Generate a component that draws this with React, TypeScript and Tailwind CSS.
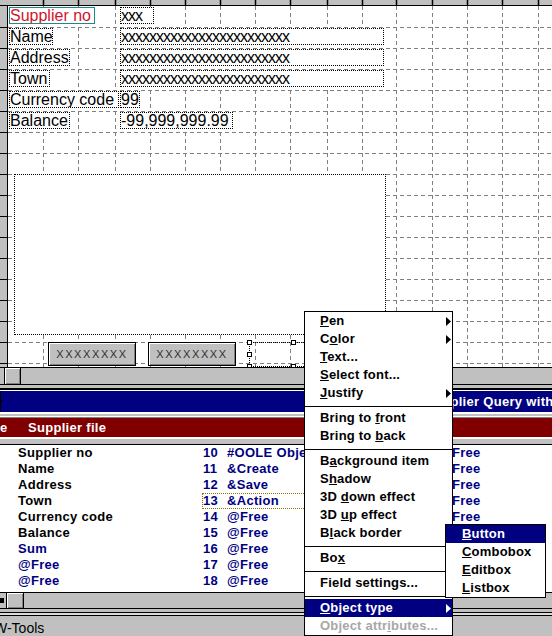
import type { ReactNode } from "react";

const GRID_X = [43, 78, 115, 150, 185, 220, 255, 290, 327, 362, 396, 432, 467, 502, 538];
const GRID_Y = Array.from({ length: 17 }, (_, i) => 27 + i * 21);
const XS = "x".repeat(24);

const formRows = [
  { label: "Supplier no", labelW: "w-[86px]", value: "xxx", valueW: "w-[34px]", key: true },
  { label: "Name", labelW: "w-[44px]", value: XS, valueW: "w-[264px]" },
  { label: "Address", labelW: "w-[61px]", value: XS, valueW: "w-[264px]" },
  { label: "Town", labelW: "w-[41px]", value: XS, valueW: "w-[264px]" },
  { label: "Currency code", labelW: "w-[110px]", value: "99", valueW: "w-[20px]" },
  { label: "Balance", labelW: "w-[61px]", value: "-99,999,999.99", valueW: "w-[113px]" },
];

const fields = [
  { name: "Supplier no" },
  { name: "Name" },
  { name: "Address" },
  { name: "Town" },
  { name: "Currency code" },
  { name: "Balance" },
  { name: "Sum", navy: true },
  { name: "@Free", navy: true },
  { name: "@Free", navy: true },
];

const objects = [
  { no: "10", name: "#OOLE Object" },
  { no: "11", name: "&Create" },
  { no: "12", name: "&Save" },
  { no: "13", name: "&Action", selected: true },
  { no: "14", name: "@Free" },
  { no: "15", name: "@Free" },
  { no: "16", name: "@Free" },
  { no: "17", name: "@Free" },
  { no: "18", name: "@Free" },
];

type Entry = { text: string; u: number; arrow?: boolean; active?: boolean; disabled?: boolean } | "sep";

const menu: Entry[] = [
  { text: "Pen", u: 0, arrow: true },
  { text: "Color", u: 1, arrow: true },
  { text: "Text...", u: 0 },
  { text: "Select font...", u: 0 },
  { text: "Justify", u: 0, arrow: true },
  "sep",
  { text: "Bring to front", u: 9 },
  { text: "Bring to back", u: 9 },
  "sep",
  { text: "Background item", u: 1 },
  { text: "Shadow", u: 1 },
  { text: "3D down effect", u: 3 },
  { text: "3D up effect", u: 3 },
  { text: "Black border", u: 1 },
  "sep",
  { text: "Box", u: 2 },
  "sep",
  { text: "Field settings...", u: -1 },
  "sep",
  { text: "Object type", u: 0, arrow: true, active: true },
  { text: "Object attributes...", u: 11, disabled: true },
];

const subMenu: Entry[] = [
  { text: "Button", u: 0, active: true },
  { text: "Combobox", u: 0 },
  { text: "Editbox", u: 0 },
  { text: "Listbox", u: 0 },
];

function mnemonic(text: string, u: number): ReactNode {
  if (u < 0) return text;
  return (
    <>
      {text.slice(0, u)}
      <u className="underline decoration-1 underline-offset-1">{text[u]}</u>
      {text.slice(u + 1)}
    </>
  );
}

function Arrow() {
  return (
    <svg width="5" height="9" viewBox="0 0 5 9" className="absolute right-[1px] top-[5px] fill-current">
      <path d="M0 0L5 4.5L0 9Z" />
    </svg>
  );
}

function MenuList({ entries, pad }: { entries: Entry[]; pad: string }) {
  return (
    <>
      {entries.map((e, i) =>
        e === "sep" ? (
          <div key={i} className="h-[7px] pt-[4px]">
            <div className="h-px bg-black" />
          </div>
        ) : (
          <div
            key={i}
            className={`relative h-[18px] ${pad} text-[13px] font-bold leading-[18px] tracking-[0.2px] whitespace-nowrap ${
              e.active ? "bg-[#000080] text-white" : e.disabled ? "text-[#a8a8a8]" : "text-black"
            }`}
          >
            {mnemonic(e.text, e.u)}
            {e.arrow && <Arrow />}
          </div>
        )
      )}
    </>
  );
}

function Handle({ pos }: { pos: string }) {
  return <div className={`absolute h-[5px] w-[5px] border border-black bg-white ${pos}`} />;
}

function XButton() {
  return (
    <div className="flex h-[24px] w-[88px] items-center justify-center border border-black bg-[#c0c0c0] text-[11px] tracking-[1.6px] text-[#303030] shadow-[inset_1px_1px_0_#fff,inset_-1px_-1px_0_#808080]">
      XXXXXXXX
    </div>
  );
}

export default function App() {
  return (
    <div className="relative h-[636px] w-[552px] overflow-hidden bg-[#c0c0c0] font-['Liberation_Sans',Arial,sans-serif]">
      {/* form designer pane */}
      <div className="flex h-[367px] flex-col bg-white">
        <div className="relative h-[6px] border-b border-black bg-[#c0c0c0]">
          <svg className="absolute inset-0" width="552" height="5">
            {GRID_X.map((x) => (
              <line key={x} x1={x + 0.5} x2={x + 0.5} y1={0} y2={5} stroke="#000" strokeWidth={1.5} />
            ))}
          </svg>
        </div>
        <div className="flex h-[361px]">
          <div className="relative w-[8px] border-r border-black bg-[#c0c0c0]">
            <svg className="absolute inset-0" width="7" height="361">
              {GRID_Y.map((y) => (
                <line key={y} x1={0} x2={7} y1={y - 6 + 0.5} y2={y - 6 + 0.5} stroke="#000" />
              ))}
            </svg>
          </div>
          <div className="relative flex-1 overflow-hidden">
            <svg className="absolute inset-0" width="544" height="361">
              {GRID_X.map((x) => (
                <line key={x} x1={x - 8 + 0.5} x2={x - 8 + 0.5} y1={0} y2={361} stroke="#808080" strokeDasharray="4 3" />
              ))}
              {GRID_Y.map((y) => (
                <line key={y} x1={0} x2={544} y1={y - 6 + 0.5} y2={y - 6 + 0.5} stroke="#808080" strokeDasharray="4 3" />
              ))}
            </svg>

            <div className="relative flex flex-col pl-[1px] pt-[1px] text-[16px] leading-[15px]">
              <div className="flex flex-col gap-[4px]">
                {formRows.map((r) => (
                  <div key={r.label} className="flex h-[17px]">
                    <div className="w-[111px]">
                      <div
                        className={`h-[17px] ${r.labelW} overflow-hidden whitespace-nowrap bg-white ${
                          r.key ? "border border-[#1a8a8a] text-[#d0142a]" : "border border-dotted border-black text-black"
                        }`}
                      >
                        {r.label}
                      </div>
                    </div>
                    <div
                      className={`h-[17px] ${r.valueW} overflow-hidden whitespace-nowrap border border-dotted border-black bg-white text-black ${
                        r.value.startsWith("x") ? "tracking-[-1px]" : ""
                      }`}
                    >
                      {r.value}
                    </div>
                  </div>
                ))}
              </div>

              <div className="ml-[5px] mt-[45px] h-[161px] w-[372px] border border-dotted border-black bg-white" />

              <div className="mt-[7px] flex h-[25px] items-start">
                <div className="ml-[39px]">
                  <XButton />
                </div>
                <div className="ml-[12px]">
                  <XButton />
                </div>
                <div className="relative ml-[13px] h-[25px] w-[89px] border border-dotted border-black">
                  <Handle pos="-left-[3px] -top-[3px]" />
                  <Handle pos="-left-[3px] top-[9px]" />
                  <Handle pos="-left-[3px] top-[21px]" />
                  <Handle pos="left-[41px] -top-[3px]" />
                  <Handle pos="left-[41px] top-[21px]" />
                </div>
              </div>
            </div>
          </div>
        </div>
      </div>

      {/* pane scrollbar */}
      <div className="flex h-[18px] border-y border-black bg-[#c0c0c0]">
        <div className="w-[5px] border-r border-black" />
        <div className="w-[16px] border-r border-black shadow-[inset_1px_1px_0_#fff,inset_-1px_-1px_0_#808080]" />
      </div>
      <div className="h-[3px] bg-[#c0c0c0]" />
      <div className="h-[2px] bg-black" />
      <div className="h-px bg-white" />

      {/* query window title */}
      <div className="flex h-[21px] items-center bg-[#000080] text-[13px] font-bold tracking-[0.3px] text-white">
        <div className="relative h-full w-[7px] border-r border-black bg-[#c0c0c0]">
          <div className="absolute left-0 top-[9px] h-[2px] w-[2px] bg-black" />
        </div>
        <span className="ml-[424px] whitespace-nowrap">Supplier Query with buttons</span>
      </div>
      <div className="h-[2px] bg-white" />
      <div className="h-[2px] bg-[#c0c0c0]" />
      <div className="h-px bg-white" />
      <div className="h-px bg-[#808080]" />

      <div className="flex h-[19px] items-center bg-[#800000] text-[13px] font-bold tracking-[0.3px] text-white">
        <span className="w-[28px]">e</span>
        <span>Supplier file</span>
      </div>
      <div className="h-[2px] bg-white" />
      <div className="h-[5px] bg-[#c0c0c0]" />
      <div className="h-px bg-black" />

      {/* field list */}
      <div className="flex h-[147px] bg-white pl-[18px] text-[13px] font-bold leading-[16px] tracking-[0.3px]">
        <div className="flex w-[184px] flex-col">
          {fields.map((f, i) => (
            <div key={i} className={`h-[16px] ${f.navy ? "text-[#000080]" : "text-black"}`}>
              {f.name}
            </div>
          ))}
        </div>
        <div className="flex w-[216px] flex-col text-[#000080]">
          {objects.map((o) => (
            <div
              key={o.no}
              className={`flex h-[16px] whitespace-nowrap border leading-[14px] ${
                o.selected ? "border-dotted border-[#8a7400]" : "border-transparent"
              }`}
            >
              <span className="w-[24px]">{o.no}</span>
              <span>{o.name}</span>
            </div>
          ))}
        </div>
        <div className="flex flex-col text-[#000080]">
          {objects.map((o, i) => (
            <div key={o.no} className="flex h-[16px] whitespace-nowrap">
              <span className="w-[21px]">{19 + i}</span>
              <span>@Free</span>
            </div>
          ))}
        </div>
      </div>

      {/* list scrollbar */}
      <div className="flex h-[17px] border-y border-black bg-[#c0c0c0]">
        <div className="relative w-[7px] border-r border-black">
          <div className="absolute left-0 top-[5px] h-[5px] w-[4px] bg-black" />
        </div>
        <div className="w-[17px] border-r border-black shadow-[inset_1px_1px_0_#fff,inset_-1px_-1px_0_#808080]" />
      </div>
      <div className="h-[3px] bg-[#c0c0c0]" />
      <div className="h-px bg-black" />
      <div className="h-[2px] bg-[#dcdcdc]" />
      <div className="h-px bg-black" />

      {/* status bar */}
      <div className="h-[20px] overflow-hidden whitespace-nowrap pt-[4px] text-[14px] leading-[16px] text-black">
        <span className="ml-[-6px]">W-Tools</span>
      </div>

      {/* context menu */}
      <div className="absolute left-[304px] top-[311px] w-[149px] border border-black bg-white">
        <MenuList entries={menu} pad="pl-[15px]" />
      </div>
      <div className="absolute left-[445px] top-[524px] w-[101px] border border-black bg-white">
        <MenuList entries={subMenu} pad="pl-[16px]" />
      </div>
    </div>
  );
}
